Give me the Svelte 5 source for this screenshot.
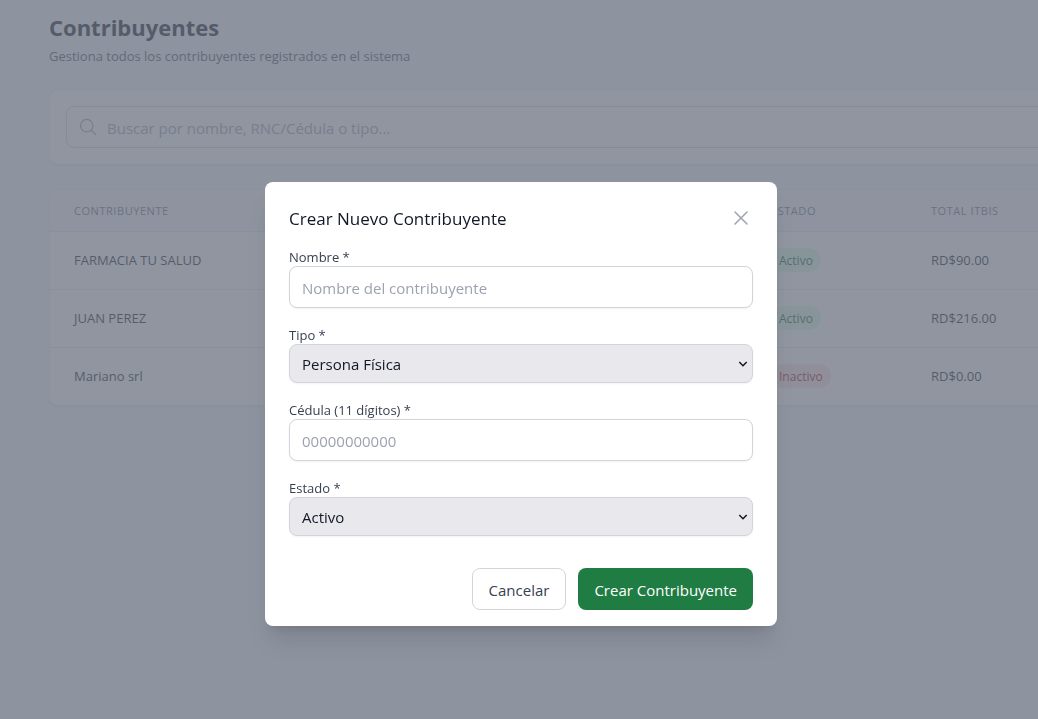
<script>
  const rows = [
    { name: 'FARMACIA TU SALUD', status: 'Activo', total: 'RD$90.00' },
    { name: 'JUAN PEREZ', status: 'Activo', total: 'RD$216.00' },
    { name: 'Mariano srl', status: 'Inactivo', total: 'RD$0.00' }
  ];
  let tipo = $state('Persona Física');
  let estado = $state('Activo');
</script>

{#snippet chevron()}
  <svg class="chevron" viewBox="0 0 10 8" width="10" height="8" aria-hidden="true">
    <path d="M1.3 2 5 5.7l3.7-3.7" fill="none" stroke="#111827" stroke-width="1.5" />
  </svg>
{/snippet}

<div class="page">
  <main class="content">
    <header class="heading">
      <h1>Contribuyentes</h1>
      <p>Gestiona todos los contribuyentes registrados en el sistema</p>
    </header>

    <section class="card search">
      <label class="search-box">
        <svg viewBox="0 0 24 24" width="20" height="20" fill="none" stroke="currentColor" stroke-width="1.5" stroke-linecap="round" stroke-linejoin="round" aria-hidden="true">
          <path d="m21 21-5.197-5.197m0 0A7.5 7.5 0 1 0 5.196 5.196a7.5 7.5 0 0 0 10.607 10.607Z" />
        </svg>
        <input type="search" aria-label="Buscar" placeholder="Buscar por nombre, RNC/Cédula o tipo..." />
      </label>
    </section>

    <section class="card">
      <table>
        <thead>
          <tr>
            <th>Contribuyente</th>
            <th class="status">Estado</th>
            <th class="total">Total ITBIS</th>
          </tr>
        </thead>
        <tbody>
          {#each rows as row}
            <tr>
              <td>{row.name}</td>
              <td><span class="badge" class:inactive={row.status === 'Inactivo'}>{row.status}</span></td>
              <td>{row.total}</td>
            </tr>
          {/each}
        </tbody>
      </table>
    </section>
  </main>
</div>

<div class="overlay">
  <div class="modal" role="dialog" aria-modal="true" aria-labelledby="modal-title">
    <div class="modal-head">
      <h2 id="modal-title">Crear Nuevo Contribuyente</h2>
      <button class="close" type="button" aria-label="Cerrar">
        <svg viewBox="0 0 24 24" width="24" height="24" fill="none" stroke="currentColor" stroke-width="1.5" stroke-linecap="round" stroke-linejoin="round" aria-hidden="true">
          <path d="M6 18 18 6M6 6l12 12" />
        </svg>
      </button>
    </div>
    <form onsubmit={(e) => e.preventDefault()}>
      <div class="field">
        <label for="nombre">Nombre *</label>
        <input id="nombre" type="text" placeholder="Nombre del contribuyente" />
      </div>
      <div class="field">
        <label for="tipo">Tipo *</label>
        <div class="select">
          <select id="tipo" bind:value={tipo}>
            <option>Persona Física</option>
          </select>
          {@render chevron()}
        </div>
      </div>
      <div class="field">
        <label for="cedula">Cédula (11 dígitos) *</label>
        <input id="cedula" type="text" placeholder="00000000000" />
      </div>
      <div class="field">
        <label for="estado">Estado *</label>
        <div class="select">
          <select id="estado" bind:value={estado}>
            <option>Activo</option>
            <option>Inactivo</option>
          </select>
          {@render chevron()}
        </div>
      </div>
      <div class="actions">
        <button class="btn" type="button">Cancelar</button>
        <button class="btn primary" type="submit">Crear Contribuyente</button>
      </div>
    </form>
  </div>
</div>

<style>
  :global(body) {
    margin: 0;
    font-family: 'Segoe UI', 'Open Sans', sans-serif;
    background: #f1f5f9;
  }
  * {
    box-sizing: border-box;
  }
  input,
  select,
  button {
    margin: 0;
    font-family: inherit;
  }
  .page {
    min-height: 100vh;
    overflow: hidden;
  }
  .content {
    display: flex;
    flex-direction: column;
    gap: 24px;
    width: calc(100% + 32px);
    padding: 9px 0 24px 49px;
  }
  h1 {
    margin: 0;
    font-size: 22px;
    line-height: 36px;
    font-weight: 700;
    color: #111827;
  }
  .heading p {
    height: 20px;
    margin: 0;
    font-size: 13px;
    line-height: 22px;
    color: #4b5563;
  }
  .card {
    overflow: hidden;
    background: #fff;
    border: 1px solid #e9edf1;
    border-radius: 8px;
    box-shadow: 0 1px 2px rgba(0, 0, 0, 0.05);
  }
  .search {
    padding: 16px;
  }
  .search-box {
    display: flex;
    align-items: center;
    gap: 9px;
    height: 42px;
    padding: 0 12px 0 11px;
    border: 1px solid #d1d5db;
    border-radius: 8px;
    color: #9ca3af;
  }
  .search-box input {
    flex: 1;
    padding: 2px 0 0;
    border: 0;
    outline: 0;
    background: transparent;
    font-size: 15px;
  }
  input::placeholder {
    color: #9ca3af;
    opacity: 1;
  }
  table {
    width: 100%;
    table-layout: fixed;
    border-collapse: collapse;
    text-align: left;
  }
  th {
    height: 41px;
    padding: 2px 24px 0;
    background: #f5f8fa;
    font-size: 11px;
    line-height: 16px;
    font-weight: 400;
    text-transform: uppercase;
    letter-spacing: 0.05em;
    color: #6b7280;
  }
  .status {
    width: 160px;
  }
  .total {
    width: 162px;
  }
  td {
    height: 58px;
    padding: 0 24px;
    border-top: 1px solid #e5e7eb;
    font-size: 13px;
    line-height: 20px;
    color: #111827;
  }
  .badge {
    display: inline-block;
    padding: 3px 8px 1px;
    border-radius: 12px;
    background: #dcfce7;
    color: #166534;
    font-size: 12px;
    line-height: 20px;
  }
  .badge.inactive {
    background: #fee2e2;
    color: #991b1b;
  }
  .overlay {
    position: fixed;
    inset: 0;
    display: flex;
    justify-content: center;
    align-items: flex-start;
    padding: 182px 0 24px 4px;
    background: rgba(107, 114, 128, 0.75);
    overflow: auto;
  }
  .modal {
    width: 100%;
    max-width: 512px;
    padding: 24px 24px 16px;
    background: #fff;
    border-radius: 8px;
    box-shadow:
      0 20px 25px -5px rgba(0, 0, 0, 0.1),
      0 8px 10px -6px rgba(0, 0, 0, 0.1);
  }
  .modal-head {
    display: flex;
    justify-content: space-between;
    height: 24px;
    margin-bottom: 16px;
  }
  h2 {
    margin: 0;
    font-size: 17px;
    line-height: 26px;
    font-weight: 400;
    color: #111827;
  }
  .close {
    display: flex;
    padding: 0;
    border: 0;
    background: none;
    color: #9ca3af;
  }
  form {
    display: flex;
    flex-direction: column;
    gap: 16px;
  }
  .field {
    display: flex;
    flex-direction: column;
  }
  .field label {
    height: 20px;
    font-size: 13px;
    line-height: 22px;
    color: #374151;
  }
  .field input,
  select {
    width: 100%;
    height: 42px;
    padding: 2px 12px 0;
    border: 1px solid #d1d5db;
    border-radius: 8px;
    background: #fff;
    box-shadow: 0 1px 2px rgba(0, 0, 0, 0.05);
    font-size: 15px;
    color: #111827;
  }
  .select {
    display: grid;
    align-items: center;
  }
  .select > * {
    grid-area: 1 / 1;
  }
  select {
    height: 39px;
    padding: 0 12px;
    appearance: none;
    background: #e9e9ed;
  }
  .chevron {
    justify-self: end;
    margin-right: 5px;
    pointer-events: none;
  }
  .actions {
    display: flex;
    justify-content: flex-end;
    gap: 12px;
    padding-top: 16px;
  }
  .btn {
    height: 42px;
    padding: 2px 16px 0;
    border: 1px solid #d1d5db;
    border-radius: 8px;
    background: #fff;
    font-size: 15px;
    color: #374151;
  }
  .primary {
    border: 0;
    background: #1f7c42;
    color: #fff;
  }
</style>
